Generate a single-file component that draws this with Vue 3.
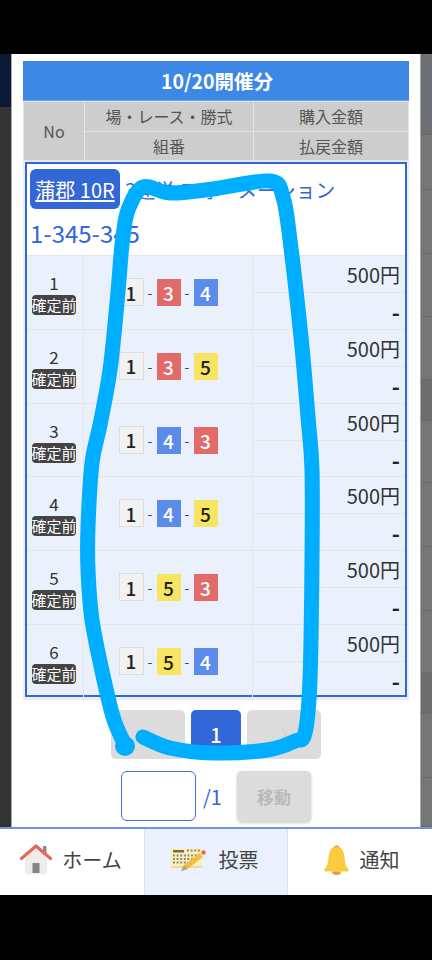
<script setup>
const head = ['場・レース・勝式', '購入金額', '組番', '払戻金額']
const rows = [
  { no: 1, boats: [3, 4] },
  { no: 2, boats: [3, 5] },
  { no: 3, boats: [4, 3] },
  { no: 4, boats: [4, 5] },
  { no: 5, boats: [5, 3] },
  { no: 6, boats: [5, 4] },
]
const sideSegments = [
  { h: 81, cls: 'tint' }, { h: 55 }, { h: 64 }, { h: 63 }, { h: 63 },
  { h: 41, cls: 'dark' }, { h: 62 }, { h: 64 }, { h: 64 }, { h: 62 },
  { h: 41, cls: 'dark' }, { h: 64 }, { h: 49 },
]
const pts = [
  [126, 747], [114, 720], [104, 680], [92, 620], [88, 570], [88, 527], [92, 463], [100, 425],
  [110, 370], [117, 303], [121, 255], [123, 237], [128, 210], [143, 187], [170, 193], [213, 189],
  [270, 181], [283, 197], [290, 240], [301, 337], [308, 417], [312, 470], [312, 560],
  [310, 680], [305, 733], [295, 741], [267, 750], [213, 753], [170, 748], [143, 737],
]
function smooth(p) {
  let d = `M${p[0][0]} ${p[0][1]}`
  for (let i = 0; i < p.length - 1; i++) {
    const a = p[Math.max(i - 1, 0)], b = p[i], c = p[i + 1], e = p[Math.min(i + 2, p.length - 1)]
    d += ` C${b[0] + (c[0] - a[0]) / 6} ${b[1] + (c[1] - a[1]) / 6} ${c[0] - (e[0] - b[0]) / 6} ${c[1] - (e[1] - b[1]) / 6} ${c[0]} ${c[1]}`
  }
  return d
}
const scribble = smooth(pts)
</script>

<template>
  <div class="screen">
    <div class="black top"></div>
    <div class="stage">
      <div class="side left"><div class="navy"></div></div>
      <main class="modal">
        <div class="table">
          <h2 class="title">10/20開催分</h2>
          <div class="head">
            <div class="head-no">No</div>
            <div v-for="h in head" :key="h" class="head-cell">{{ h }}</div>
          </div>
          <div class="body">
            <div class="race">
              <div class="race-line"><a class="venue">蒲郡 10R</a><span class="kind">3連単 フォーメーション</span></div>
              <div class="combo">1-345-345</div>
            </div>
            <div v-for="r in rows" :key="r.no" class="row">
              <div class="no">
                <span class="num">{{ r.no }}</span>
                <span class="badge">確定前</span>
              </div>
              <div class="boats">
                <span class="boat b1">1</span>
                <span class="dash">-</span>
                <span class="boat" :class="'b' + r.boats[0]">{{ r.boats[0] }}</span>
                <span class="dash">-</span>
                <span class="boat" :class="'b' + r.boats[1]">{{ r.boats[1] }}</span>
              </div>
              <div class="money">
                <div class="amount">500円</div>
                <div class="payout">-</div>
              </div>
            </div>
          </div>
        </div>
        <nav class="pager">
          <button class="page-btn wide">
            <svg width="14" height="14" viewBox="0 0 14 14"><path d="M9 2 4 7l5 5" fill="none" stroke="#cfcfcf" stroke-width="1.2" /></svg>
          </button>
          <button class="page-btn current">1</button>
          <button class="page-btn wide">
            <svg width="14" height="14" viewBox="0 0 14 14"><path d="m5 2 5 5-5 5" fill="none" stroke="#cfcfcf" stroke-width="1.2" /></svg>
          </button>
        </nav>
        <div class="jump">
          <input class="jump-input" type="text" />
          <span class="total">/1</span>
          <button class="jump-btn">移動</button>
        </div>
      </main>
      <div class="side right">
        <div v-for="(s, i) in sideSegments" :key="i" class="seg" :class="s.cls" :style="{ height: s.h + 'px' }"></div>
      </div>
    </div>
    <footer class="tabs">
      <div class="tab home">
        <svg width="32" height="31" viewBox="0 0 32 31">
          <rect x="23" y="2" width="3.5" height="9" fill="#8b8b8b" />
          <path d="M5 14 16 4l11 10v16H5z" fill="#efebe6" />
          <path d="M1.5 14.5 16 2l14.500 12.500" fill="none" stroke="#e0685c" stroke-width="3.200" stroke-linejoin="round" stroke-linecap="round" />
          <rect x="12.500" y="19" width="7" height="10" fill="#858585" />
        </svg>
        <span>ホーム</span>
      </div>
      <div class="tab active">
        <svg width="38" height="28" viewBox="0 0 38 28">
          <rect x="1" y="4" width="31" height="18" rx="1" fill="#ecdca0" />
          <rect x="0" y="2" width="32" height="18" rx="1" fill="#f9f0c0" />
          <rect x="3" y="4" width="11" height="2.500" fill="#6f6a58" />
          <path d="M17 4.500h13M3 9.500h27M3 13h22M3 16.500h15" fill="none" stroke="#8d8670" stroke-width="2" stroke-dasharray="2 1.600" />
          <path d="M11 25 14 19 29.500 7l3.500 4L17.500 23z" fill="#eebf3f" />
          <path d="m11 25 3-6 3.500 4z" fill="#b9a677" />
          <circle cx="33.500" cy="6.500" r="2.200" fill="#e0685c" />
        </svg>
        <span>投票</span>
      </div>
      <div class="tab bell">
        <svg width="25" height="30" viewBox="0 0 25 30">
          <circle cx="12.500" cy="3.500" r="3" fill="#ef9a2f" />
          <path d="M12.500 2C6.500 2 5 7 4.500 12c-.5 5.500-1 9-3.500 11.500-1.500 1.500-.5 3 1 3h21c1.500 0 2.500-1.500 1-3-2.500-2.500-3-6-3.500-11.500C20 7 18.500 2 12.500 2z" fill="#fbcb3f" />
          <path d="M8 26.500h9a4.500 3.500 0 0 1-9 0z" fill="#ef9a2f" />
        </svg>
        <span>通知</span>
      </div>
    </footer>
    <div class="black bottom"></div>
    <svg class="scribble" width="432" height="960" viewBox="0 0 432 960">
      <path :d="scribble" fill="none" stroke="#00aeff" stroke-width="15" stroke-linecap="round" stroke-linejoin="round" />
      <circle cx="125" cy="746" r="10" fill="#00aeff" />
    </svg>
  </div>
</template>

<style scoped>
.screen {
  position: relative;
  width: 432px;
  height: 960px;
  display: flex;
  flex-direction: column;
  overflow: hidden;
  background: #000;
  font-family: "Noto Sans CJK JP", "Noto Sans", sans-serif;
  color: #333;
}
.black.top { height: 54px; flex: none; }
.black.bottom { height: 65px; flex: none; }
.stage { height: 773px; flex: none; display: flex; }
.side { flex: none; }
.side.left { width: 11px; background: #333; }
.navy { height: 53px; background: #0a1a35; }
.side.right { width: 11px; background: #767676; overflow: hidden; }
.seg { box-sizing: border-box; border-bottom: 1px solid #6a6a6a; }
.seg.tint { background: #6c6f73; }
.seg.dark { background: #6d6d6d; }
.modal {
  width: 410px;
  box-sizing: border-box;
  flex: none;
  background: #fff;
  border-left: 1px solid #a8a8a8;
  border-right: 1px solid #a8a8a8;
  padding: 7px 11px 0;
}
.table { background: #e8edf4; padding-bottom: 3px; }
.title {
  margin: 0;
  height: 40px;
  box-sizing: border-box;
  background: #3c88e6;
  border-bottom: 1px solid #6aa6ee;
  color: #fff;
  font-size: 19.500px;
  font-weight: 700;
  line-height: 40px;
  text-align: center;
  padding-left: 2px;
}
.head {
  display: grid;
  grid-template-columns: 60px 168px 1fr;
  grid-template-rows: 29px 28px;
  gap: 1px;
  padding: 1px;
  height: 60px;
  box-sizing: border-box;
  background: #e4e4e4;
  font-size: 16px;
  color: #555;
}
.head-no, .head-cell {
  background: #cdcdcd;
  display: flex;
  align-items: center;
  justify-content: center;
  padding-bottom: 1px;
  box-sizing: border-box;
}
.head-no { grid-row: span 2; }
.body {
  margin: 1px 2px 0;
  border: 2px solid #3366d6;
  background: #fff;
}
.race { height: 91px; box-sizing: border-box; padding: 5px 3px 0; color: #3366d6; }
.race-line { display: flex; align-items: center; height: 40px; font-size: 20px; white-space: nowrap; }
.venue {
  display: flex;
  align-items: center;
  height: 40px;
  padding: 0 6px;
  box-sizing: border-box;
  width: 90px;
  justify-content: center;
  background: #3366d6;
  color: #fff;
  border-radius: 6px;
  text-decoration: underline;
  text-underline-offset: 2px;
}
.kind { margin-left: 5px; font-size: 19.600px; }
.combo { font-size: 24px; line-height: 30px; margin-top: 9px; }
.row {
  display: grid;
  grid-template-columns: 57px 169px 1fr;
  height: 73.800px;
  box-sizing: border-box;
  background: #eaf1fd;
  border-top: 1px solid #e4e6ea;
}
.row:last-child { height: 71px; }
.no {
  border-right: 1px solid #e4e6ea;
  display: flex;
  flex-direction: column;
  align-items: center;
  padding: 16px 2px 0 0;
}
.num { font-size: 17px; line-height: 22px; color: #333; }
.badge {
  width: 44px;
  height: 20px;
  margin-top: 1px;
  background: #444;
  border-radius: 4px;
  color: #fff;
  font-size: 15px;
  line-height: 20px;
  text-align: center;
  white-space: nowrap;
  display: flex;
  justify-content: center;
}
.boats {
  border-right: 1px solid #e4e6ea;
  display: flex;
  align-items: flex-start;
  justify-content: center;
  padding-top: 22px;
}
.boat {
  width: 24px;
  height: 27px;
  margin-top: 1px;
  display: flex;
  align-items: center;
  justify-content: center;
  font-size: 19px;
  font-weight: 500;
  line-height: 1;
}
.dash { width: 13px; height: 28px; line-height: 28px; text-align: center; font-size: 14px; color: #444; }
.b1 { width: 25px; height: 28px; margin-top: 0; box-sizing: border-box; background: #f2f2f2; border: 1px solid #ddd; color: #222; }
.b3 { background: #e26a68; color: #fff; }
.b4 { background: #5b8cec; color: #fff; }
.b5 { background: #f7e463; color: #222; }
.money { display: flex; flex-direction: column; }
.amount {
  height: 37px;
  flex: none;
  box-sizing: border-box;
  border-bottom: 1px solid #e4e6ea;
  font-size: 20px;
  line-height: 37px;
  text-align: right;
  padding-right: 5px;
}
.payout {
  flex: 1;
  font-size: 22px;
  font-weight: 700;
  line-height: 36px;
  text-align: right;
  padding-right: 5px;
  color: #222;
}
.pager { display: flex; justify-content: center; gap: 6px; margin-top: 10px; }
.page-btn {
  height: 49px;
  border: 0;
  border-radius: 5px;
  background: #dcdcdc;
  padding: 0;
  display: flex;
  align-items: center;
  justify-content: center;
  font-family: inherit;
}
.page-btn.wide { width: 74px; }
.page-btn.current { width: 50px; background: #3366d6; color: #fff; font-size: 20px; font-weight: 500; }
.jump { display: flex; align-items: flex-start; margin-top: 12px; padding-left: 98px; }
.jump-input {
  width: 75px;
  height: 50px;
  box-sizing: border-box;
  border: 1px solid #3f72dc;
  border-radius: 6px;
  background: #fff;
  padding: 0;
}
.total { width: 41px; box-sizing: border-box; padding-left: 7px; font-size: 20px; color: #3366d6; align-self: center; }
.jump-btn {
  width: 74px;
  height: 51px;
  border: 0;
  border-radius: 5px;
  background: #dcdcdc;
  color: #b9b9b9;
  font-family: inherit;
  font-size: 17px;
  font-weight: 700;
  box-shadow: 0 1px 3px rgba(0, 0, 0, .2);
  padding: 0;
}
.tabs {
  height: 68px;
  flex: none;
  box-sizing: border-box;
  display: grid;
  grid-template-columns: 144px 144px 144px;
  background: #fff;
  border-top: 2px solid #6f95e0;
}
.tab {
  display: flex;
  align-items: center;
  justify-content: center;
  gap: 11px;
  font-size: 20px;
  color: #444;
  padding-bottom: 5px;
}
.tab.home { gap: 10px; padding-right: 2px; }
.tab.bell { padding-left: 3px; }
.tab.active {
  background: #eaf1fc;
  border-left: 1px solid #dde3ec;
  border-right: 1px solid #dde3ec;
  padding-right: 4px;
}
.scribble { position: absolute; left: 0; top: 0; pointer-events: none; }
</style>
